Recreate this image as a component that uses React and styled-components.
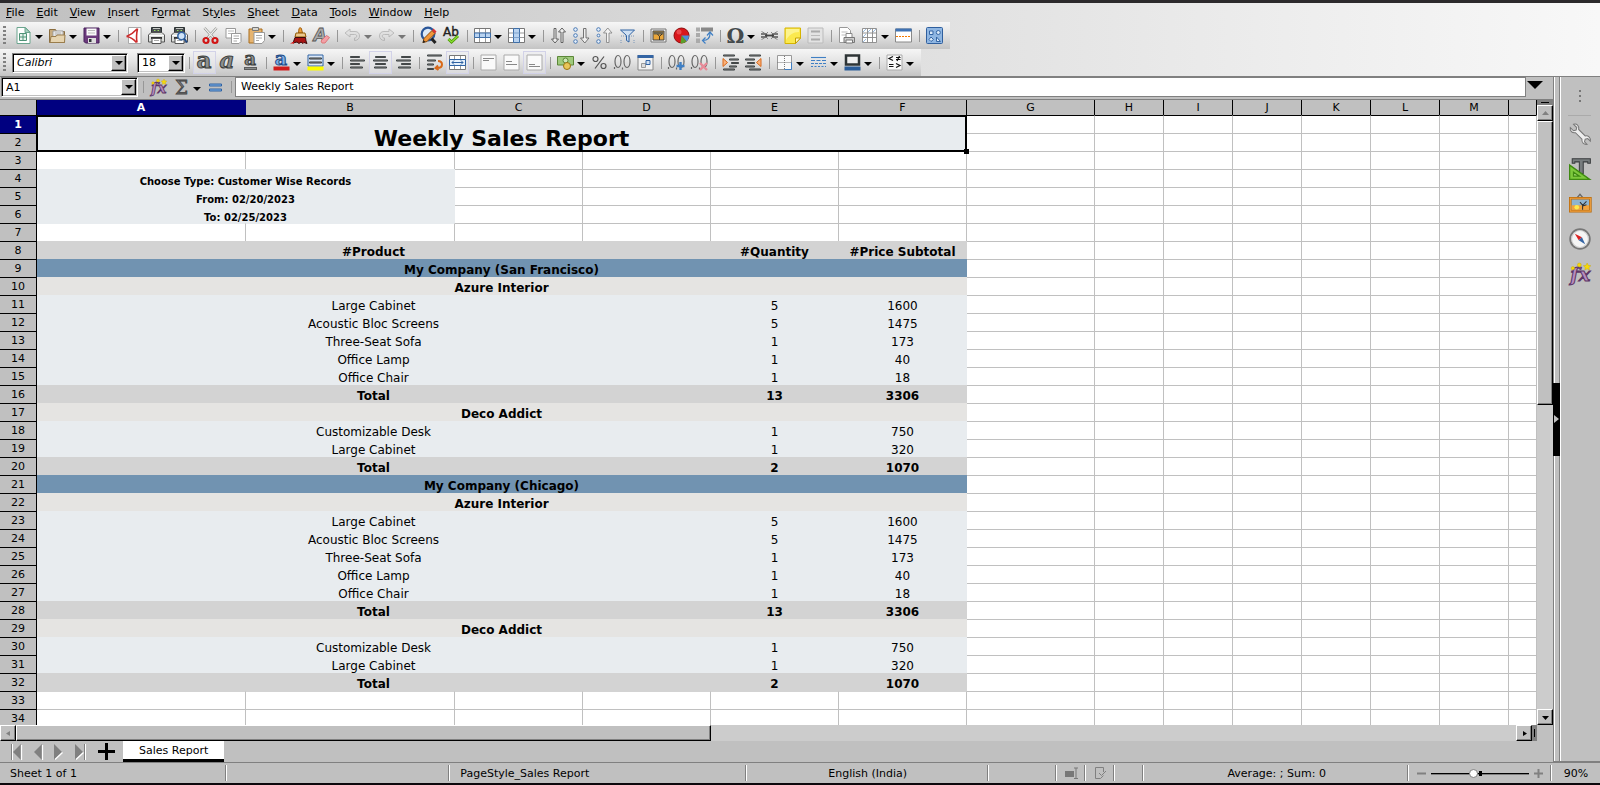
import React from 'react';
import styled, { createGlobalStyle, css } from 'styled-components';

const GlobalStyle = createGlobalStyle`
  * {
    box-sizing: border-box;
  }
  body {
    margin: 0;
    background: #c0c0c0;
    color: #000;
    font: 11px/14px 'DejaVu Sans', sans-serif;
  }
  button, input, select {
    font: inherit;
    color: inherit;
    margin: 0;
    padding: 0;
    border: 0;
    background: none;
    border-radius: 0;
  }
`;

const raised = css`
  background: #c0c0c0;
  border: 1px solid;
  border-color: #fff #000 #000 #fff;
  box-shadow: inset -1px -1px 0 #808080;
`;

const Window = styled.div`
  display: flex;
  flex-direction: column;
  height: 100vh;
  min-height: 400px;
  overflow: hidden;
  border-top: 3px solid #2c2a2c;
  border-bottom: 2px solid #0c080c;
`;

const Bars = styled.header`
  background: linear-gradient(90deg, #c0c0c0, #f8f8f8);
`;

const MenuBar = styled.nav`
  display: flex;
  align-items: center;
  height: 19px;
`;

const MenuItem = styled.button`
  padding: 0 6px;
`;

const Toolbar = styled.div`
  display: flex;
  align-items: center;
  width: fit-content;
  height: 27px;
  padding-right: 4px;
  background: linear-gradient(#f6f6f6, #e4e4e4 45%, #c4c4c4);
`;

const Grip = styled.span`
  width: 3px;
  height: 19px;
  margin: 0 6px 0 3px;
  background: repeating-linear-gradient(#808080 0 2px, transparent 2px 4px);
`;

const Separator = styled.span`
  display: flex;
  justify-content: center;
  width: 8px;
  flex: none;
  &::before {
    content: '';
    width: 1px;
    height: 12px;
    background: #979797;
  }
`;

const ToolButton = styled.button`
  display: flex;
  align-items: center;
  justify-content: center;
  flex: none;
  width: 23px;
  height: 23px;
  opacity: ${props => (props.$dim ? 0.55 : 1)};
  ${props => props.$on && css`
    border: 1px solid #d2d2e8;
    background: rgba(236, 236, 240, 0.5);
  `}
  svg {
    flex: none;
  }
`;

const CaretButton = styled.button`
  display: flex;
  align-items: center;
  flex: none;
  width: 11px;
  height: 23px;
  padding-top: 3px;
  &::before {
    content: '';
    border: 4px solid transparent;
    border-width: 4px 4px 0;
    border-top-color: ${props => (props.$dim ? '#777' : '#000')};
  }
`;

const ComboBox = styled.span`
  position: relative;
  display: flex;
  flex: none;
  width: ${props => props.$width};
  height: 20px;
  background: #fff;
  border: 1px solid;
  border-color: #808080 #fff #fff #808080;
  box-shadow: inset 1px 1px 0 #000, inset -1px -1px 0 #c0c0c0;
  select {
    width: 100%;
    padding-left: 4px;
    appearance: none;
    outline: none;
    font-style: ${props => (props.$italic ? 'italic' : 'normal')};
  }
`;

const ComboArrow = styled.span`
  ${raised}
  position: absolute;
  top: 1px;
  right: 1px;
  bottom: 1px;
  width: 15px;
  display: flex;
  align-items: center;
  justify-content: center;
  pointer-events: none;
  &::before {
    content: '';
    border: 4px solid transparent;
    border-width: 4px 4px 0;
    border-top-color: #000;
  }
`;

const Gap = styled.span`
  width: 9px;
`;

const Body = styled.div`
  flex: 1;
  display: flex;
  min-height: 0;
`;

const Main = styled.main`
  flex: 1;
  display: flex;
  flex-direction: column;
  min-width: 0;
  border-top: 1px solid #808080;
`;

const FormulaBar = styled.div`
  display: flex;
  align-items: flex-start;
  height: 23px;
  padding-left: 1px;
  border-bottom: 1px solid #808080;
  ${ComboBox} {
    margin-right: 1px;
    padding-top: 1px;
  }
  ${ToolButton}, ${CaretButton} {
    height: 20px;
  }
  ${Separator} {
    height: 20px;
    align-items: center;
  }
`;

const FormulaInput = styled.input`
  flex: 1;
  min-width: 0;
  height: 20px;
  padding: 0 5px 1px;
  background: #fff;
  border: 1px solid #808080;
  outline: none;
`;

const ExpandButton = styled.button`
  width: 27px;
  height: 19px;
  padding: 0 9px 2px 0;
  &::before {
    content: '';
    display: inline-block;
    border: 8px solid transparent;
    border-width: 8px 8px 0;
    border-top-color: #000;
  }
`;

const GridArea = styled.div`
  flex: 1;
  display: flex;
  min-height: 0;
`;

const SheetView = styled.div`
  flex: 1;
  min-width: 0;
  overflow: hidden;
  background: #fff;
`;

const Sheet = styled.table`
  width: 100%;
  table-layout: fixed;
  border-collapse: separate;
  border-spacing: 0;
`;

const Col = styled.col`
  width: ${props => props.$width};
`;

const ColHead = styled.th`
  height: 15px;
  padding: 0;
  line-height: 12px;
  font-weight: ${props => (props.$active ? 700 : 400)};
  color: ${props => (props.$active ? '#fff' : '#000')};
  background: ${props => (props.$active ? '#000080' : '#c0c0c0')};
  border-right: 1px solid ${props => (props.$active ? '#000080' : '#000')};
`;

const RowHead = styled.th`
  height: 18px;
  padding: 0;
  line-height: 16px;
  font-weight: ${props => (props.$active ? 700 : 400)};
  color: ${props => (props.$active ? '#fff' : '#000')};
  background: ${props => (props.$active ? '#000080' : '#c0c0c0')};
  border: solid #000;
  border-width: 1px 1px 0 0;
`;

const fills = {
  info: '#e8ecef',
  head: '#d3d3d3',
  company: '#7193b1',
  partner: '#e5e4e2',
};

const Cell = styled.td`
  position: ${props => (props.$title ? 'relative' : 'static')};
  height: 18px;
  padding: 0;
  vertical-align: bottom;
  text-align: center;
  white-space: nowrap;
  font-size: 12px;
  line-height: 14px;
  font-weight: ${props => (props.$bold ? 700 : 400)};
  border: solid #c0c0c0;
  border-width: 1px 1px 0 0;
  ${props => props.$edge && css`
    border-top-color: ${props.$edge};
  `}
  ${props => props.$fill && css`
    background: ${props.$fill};
    border-color: ${props.$fill};
  `}
  ${props => props.$small && css`
    font-size: 10px;
    line-height: 10px;
  `}
  ${props => props.$title && css`
    font-size: 22px;
    line-height: 24px;
  `}
`;

const CellCursor = styled.span`
  position: absolute;
  inset: -1px;
  border: 2px solid #000;
  &::after {
    content: '';
    position: absolute;
    right: -4px;
    bottom: -4px;
    width: 5px;
    height: 5px;
    background: #000;
  }
`;

const ScrollColumn = styled.div`
  display: flex;
  flex-direction: column;
  width: 16px;
  background: #ccc;
`;

const ScrollRow = styled.div`
  display: flex;
  height: 16px;
  padding-right: 16px;
  background: linear-gradient(#c0c0c0, #c0c0c0) right / 16px 100% no-repeat #ccc;
`;

const Thumb = styled.div`
  ${raised}
  flex: ${props => props.$size} 1 0;
`;

const Track = styled.div`
  flex: ${props => props.$size} 1 0;
`;

const Split = styled.div`
  display: flex;
  align-items: center;
  justify-content: center;
  flex: 0 0 5px;
  background: #808080;
  &::before {
    content: '';
    background: #000;
    width: ${props => (props.$vertical ? '1px' : '8px')};
    height: ${props => (props.$vertical ? '8px' : '1px')};
  }
`;

const ScrollButton = styled.button`
  ${raised}
  display: flex;
  align-items: center;
  justify-content: center;
  flex: 0 0 16px;
  height: 16px;
`;

const Tabs = styled.div`
  display: flex;
  height: 21px;
  padding-left: 6px;
`;

const TabNav = styled.button`
  display: flex;
  align-items: center;
  width: ${props => (props.$wide ? '34px' : '21px')};
  height: 21px;
  padding-left: ${props => (props.$wide ? '8px' : '5px')};
`;

const Tab = styled.button`
  margin-left: -1px;
  padding: 1px 16px 0;
  background: #fff;
  border-bottom: 3px solid #000;
`;

const SidebarEdge = styled.div`
  display: flex;
  align-items: center;
  width: 8px;
  border: solid #808080;
  border-width: 1px 0 1px 1px;
  background: linear-gradient(90deg, #fff 1px, #c0c0c0 1px 5px, #808080 5px 6px, #fff 6px);
`;

const EdgeHandle = styled.button`
  display: flex;
  align-items: center;
  justify-content: center;
  flex: none;
  width: 7px;
  height: 73px;
  margin-left: -1px;
  background: #000;
`;

const Sidebar = styled.aside`
  display: flex;
  flex-direction: column;
  align-items: center;
  width: 39px;
  padding-right: 2px;
  border: solid #808080;
  border-width: 1px 0;
`;

const SidebarMenu = styled.button`
  display: flex;
  align-items: center;
  justify-content: center;
  width: 23px;
  height: 39px;
  border-bottom: 1px solid #aaa;
`;

const DeckButton = styled.button`
  display: flex;
  align-items: center;
  justify-content: center;
  width: 35px;
  height: 35px;
`;

const StatusBar = styled.footer`
  display: flex;
  align-items: stretch;
  height: 21px;
  border-top: 1px solid #808080;
`;

const Field = styled.div`
  display: flex;
  align-items: center;
  justify-content: ${props => (props.$start ? 'flex-start' : 'center')};
  text-indent: ${props => (props.$start ? '10px' : '0')};
  flex: ${props => (props.$grow ? `${props.$grow} 1 0` : '0 0 29px')};
  min-width: 0;
  gap: 5px;
  padding-top: 1px;
  white-space: nowrap;
  background: linear-gradient(90deg, #808080 1px, #fff 1px) 100% 50% / 2px 16px no-repeat;
  &:last-child {
    background: none;
  }
`;

const ZoomField = styled(Field)`
  flex: 0 0 143px;
`;

const ZoomLevel = styled(Field)`
  flex: 0 0 48px;
`;

const ZoomStep = styled.button`
  display: flex;
  width: 9px;
`;

const ZoomSlider = styled.input`
  appearance: none;
  width: 98px;
  height: 10px;
  background:
    linear-gradient(#000, #000) 50% 50% / 3px 5px no-repeat,
    linear-gradient(#000 1px, #808080 1px) 0 50% / 100% 2px no-repeat;
  &::-webkit-slider-thumb {
    appearance: none;
    width: 9px;
    height: 9px;
    border-radius: 50%;
    background: #fff;
    border: 1px solid #808080;
  }
`;

const GlyphA = ({ fill = '#8d908e', stroke = '#3a3d3b', size = 23, italic, y = 14, x = 8 }) => (
  <text x={x} y={y} textAnchor="middle" fontFamily="DejaVu Serif" fontWeight="700" fontStyle={italic ? 'italic' : 'normal'} fontSize={size} fill={fill} stroke={stroke} strokeWidth="1">a</text>
);

const Lines = ({ rows, stroke = '#2e3436' }) => rows.map(([x1, x2, y]) => (
  <g key={y}>
    <path d={`M${x1} ${y}H${x2}`} stroke={stroke} strokeWidth="2" strokeLinecap="round" />
    <path d={`M${x1} ${y}H${x2}`} stroke="#777" strokeWidth="0.6" />
  </g>
));

const Table = () => (
  <>
    <path d="M.5 1.500h16v14h-16z" fill="#fff" stroke="#777" />
    <path d="M5.500 2v13M11.500 2v13M1 6h15M1 10.500h15" stroke="#999" fill="none" />
  </>
);

const Printer = () => (
  <>
    <path d="M3.500 .5h10v6h-10z" fill="#4a4e50" stroke="#2e3436" />
    <path d="M5 1.500h7" stroke="#c5c8c4" />
    <path d="M6 3.500h1.500m2 0H11" stroke="#9adf62" />
    <path d="M3 5.500h11l2.500 2.500v7H.5V8z" fill="#dcdedb" stroke="#555" />
    <path d="M1 8.500h15" stroke="#fff" />
    <path d="M3 10h11v2H3z" fill="#333" />
    <path d="M4 11.500h9v5H4z" fill="#fff" stroke="#555" />
    <path d="M6 13.500h5" stroke="#aaa" />
  </>
);

const Fx = () => (
  <>
    <text x="1" y="14" fontFamily="DejaVu Serif" fontStyle="italic" fontWeight="700" fontSize="15" fill="#b78dbf" stroke="#5c3566" strokeWidth=".8">fx</text>
    <g fill="#f5d90a" stroke="#c4a000" strokeWidth=".3">
      <circle cx="3" cy="4" r="1.300" />
      <circle cx="8" cy="1.500" r="1.500" />
      <path d="M14 0l.9 1.800 2 .3-1.500 1.400.4 2L14 4.500l-1.800 1 .4-2-1.500-1.400 2-.3z" />
    </g>
  </>
);

const Zeros = () => (
  <g fill="none" stroke="#666" strokeWidth="1.200">
    <ellipse cx="4" cy="7.500" rx="3" ry="6" />
    <ellipse cx="13" cy="7.500" rx="3" ry="6" />
    <path d="M8.500 13.500v2M.500 13v2" />
  </g>
);

const Dots = ({ small }) => (
  <g fill="#e8f1fb" stroke="#4a7ab5">
    <circle cx="2.500" cy="2.500" r="1.800" />
    <circle cx="2.500" cy="8.500" r={small ? 1.400 : 1.800} />
    <circle cx="2.500" cy="14.500" r="1.800" />
  </g>
);

const icons = {
  newSheet: (
    <>
      <path d="M2 .5h8.500L15 5v11.500H2z" fill="#fff" stroke="#6ba58e" />
      <path d="M10 .5V5.500h5z" fill="#a9d1c0" stroke="#6ba58e" />
      <path d="M4.500 6.500h7v7h-7zM8 6.500v7M4.500 10h7" fill="#e5f3ec" stroke="#4f9377" />
    </>
  ),
  open: (
    <>
      <path d="M.5 2.500h6l1 2h8v11H.5z" fill="#c7ab7f" stroke="#8a6d3f" />
      <path d="M4 4h10v8H4z" fill="#fff" stroke="#999" />
      <path d="M5.500 6h7M5.500 8h7" stroke="#999" />
      <path d="M1 15.500l1-6h5l1-1.500h8l-.5 7.500z" fill="#e6d4b0" stroke="#9a7d4c" />
    </>
  ),
  save: (
    <>
      <path d="M1 1h15v15H2.500L1 14.500z" fill="#6b3a7c" stroke="#47215a" />
      <path d="M3.500 1.500h10v7h-10z" fill="#fafafa" />
      <path d="M5 3.500h7M5 6h7" stroke="#bbb" />
      <path d="M5 11h8v5H5z" fill="#ddd" />
      <path d="M6 12h2.500v3H6z" fill="#2e3436" />
    </>
  ),
  pdf: (
    <>
      <path d="M3.500 .5h12.500v16h-12.500z" fill="#fff" stroke="#aaa" />
      <path d="M12.500 1.500c-1 5-1.500 9-.5 14M1.500 9.500C5 8 9 5.500 12 2M1.500 9.500c4 .5 7 2.500 10 6" fill="none" stroke="#cc2a2a" strokeWidth="1.600" />
    </>
  ),
  print: <Printer />,
  preview: (
    <>
      <Printer />
      <circle cx="10.500" cy="9" r="3.700" fill="#cfe3f8" stroke="#3465a4" strokeWidth="1.500" />
      <path d="M13 11.500l3 4" stroke="#204a87" strokeWidth="2" />
    </>
  ),
  cut: (
    <>
      <path d="M2.500 1L12 11.500M14.500 1L5 11.500" stroke="#888a85" strokeWidth="2.600" />
      <path d="M2.500 1L12 11.500M14.500 1L5 11.500" stroke="#eee" strokeWidth="1.200" />
      <circle cx="4" cy="13.500" r="2.500" fill="none" stroke="#d11515" strokeWidth="2.200" />
      <circle cx="13" cy="13.500" r="2.500" fill="none" stroke="#d11515" strokeWidth="2.200" />
    </>
  ),
  copy: (
    <>
      <path d="M1 1.500h9.500V11H1z" fill="#fff" stroke="#999" />
      <path d="M3 4h6M3 6.500h6" stroke="#bbb" />
      <path d="M6.500 6.500H16v8l-2 2H6.500z" fill="#fff" stroke="#999" />
      <path d="M8.500 9h5.500M8.500 11.500h5.500M8.500 14H12" stroke="#aaa" />
    </>
  ),
  paste: (
    <>
      <path d="M1 2h13v14H1z" fill="#e6b470" stroke="#a86d1c" />
      <path d="M4.500.5h6v3h-6z" fill="#d5d5d0" stroke="#777" />
      <path d="M6 5.500h10.500v8l-2.500 3H6z" fill="#fff" stroke="#999" />
      <path d="M8 8.500h6M8 11h6M8 13.500h3" stroke="#aaa" />
    </>
  ),
  brush: (
    <>
      <path d="M9 1.500c.5-1 2.500-1 2.500.5L12.500 6h-4z" fill="#f0a23a" stroke="#a05f10" />
      <path d="M6 6h9l1 4H5z" fill="#ecc88e" stroke="#8f5902" />
      <path d="M5 10.500H15.500l.5 3.500 1 2.500-3-1-1 1-2-1.500-2 1.500-2-1.500L3 16z" fill="#a81414" stroke="#3b0a0a" />
      <path d="M0 16.500l4-2v2z" fill="#d11" />
    </>
  ),
  clear: (
    <>
      <text x="7" y="14" textAnchor="middle" fontFamily="DejaVu Sans" fontStyle="italic" fontWeight="700" fontSize="17" fill="#aaa" stroke="#555" strokeWidth=".8">A</text>
      <path d="M8 14l5.500-5.500 3 2L12 16H9z" fill="#f2a0a8" stroke="#d77" />
    </>
  ),
  undo: <path d="M1 6l5-4v2.500h5c3 0 4.500 2 4.500 4.500 0 2.500-2 4.500-5 4.500v-2.500c1.500 0 2.200-.8 2.200-2S12 7.500 10.500 7.500H6V10z" fill="#ddd" stroke="#999" />,
  redo: <path d="M16 6l-5-4v2.500H6C3 4.500 1.500 6.500 1.500 9c0 2.500 2 4.500 5 4.500v-2.500C5 11 4.300 10.200 4.300 9S5 7.500 6.500 7.500H11V10z" fill="#ddd" stroke="#999" />,
  find: (
    <>
      <circle cx="8" cy="7" r="6.300" fill="#dce9f7" stroke="#2a5699" strokeWidth="2.200" />
      <path d="M11.500 11.500l4 4.500" stroke="#222" strokeWidth="3" />
      <path d="M3 15.500l1-4 8-8 3 3-8 8z" fill="#f0953a" stroke="#8a4b0a" />
      <path d="M12 3.500l3 3 1.500-2-3-3z" fill="#d33" />
      <path d="M2.500 16l1-3 2 2z" fill="#222" />
    </>
  ),
  spell: (
    <>
      <text x="0" y="9" fontFamily="DejaVu Sans" fontSize="12" fill="#222" stroke="#222" strokeWidth=".4">Ab</text>
      <path d="M5.500 12l3 3L15 9" fill="none" stroke="#4e9a06" strokeWidth="3" />
      <path d="M5.500 12l3 3L15 9" fill="none" stroke="#8ae234" strokeWidth="1.200" />
    </>
  ),
  row: (
    <>
      <Table />
      <path d="M.5 6h16v4.500H.5z" fill="#b9d3f0" stroke="#3f6fa8" />
      <path d="M5.500 6v4.500M11.500 6v4.500" stroke="#3f6fa8" />
    </>
  ),
  column: (
    <>
      <Table />
      <path d="M5.500 1.500h6v14h-6z" fill="#b9d3f0" stroke="#3f6fa8" />
      <path d="M5.500 6h6M5.500 10.500h6" stroke="#7fa3cd" />
    </>
  ),
  sort: (
    <g fill="#eee" stroke="#555" strokeWidth=".9">
      <path d="M4 1.500h2V12h2.500L5 16 1.500 12H4z" />
      <path d="M11 15.500h2V5h2.500L12 1 8.500 5H11z" />
    </g>
  ),
  ascending: (
    <>
      <Dots />
      <path d="M10.500 1.500h2.500V11h3l-4.200 5-4.300-5h3z" fill="#eee" stroke="#666" strokeWidth=".9" />
    </>
  ),
  descending: (
    <>
      <Dots small />
      <path d="M10.500 15.500h2.500V6h3l-4.200-5L7.500 6h3z" fill="#f2f2f2" stroke="#888" strokeWidth=".9" />
    </>
  ),
  filter: (
    <>
      <path d="M2 9h13M2 13v3M15 13v3" stroke="#7a96b8" strokeDasharray="1 1" />
      <path d="M1.500 3h14L10 8.500v6.500l-2.500-1.500V8.500z" fill="#cfe0f3" stroke="#2f62a3" />
    </>
  ),
  image: (
    <>
      <path d="M1 2h15v13H1z" fill="#eee" stroke="#777" />
      <path d="M3 4h11v9H3z" fill="#e9a63a" stroke="#444" />
      <path d="M3.500 4.500h10v3h-10z" fill="#6b6550" />
      <path d="M9.500 13V9.500L7.500 7M9.500 9.500L12 7" stroke="#222" fill="none" strokeWidth=".8" />
    </>
  ),
  chart: (
    <>
      <circle cx="8.500" cy="8.500" r="7.500" fill="#d9161b" stroke="#8e0b0b" />
      <path d="M8.500 8.500H16c0 3-1.200 4.800-2.500 6z" fill="#4a90d9" />
      <path d="M8.500 8.500l5 6c-2 1.600-4 2-6 1.500z" fill="#5aa02c" />
      <circle cx="6" cy="5" r="2.500" fill="#f4696c" opacity=".6" />
    </>
  ),
  pivot: (
    <>
      <path d="M0 .5h4v4H0zM0 6h4v4H0zM0 11.500h4v4.500H0z" fill="#aaa" />
      <path d="M5 .5h12v4H5z" fill="#888" />
      <path d="M7 13.500c4 0 7-2 7-7M11 8.500l3-3.500 3 3.500M9.500 10.500l-3 3 3 3" fill="none" stroke="#3f7fc4" strokeWidth="1.200" />
    </>
  ),
  omega: <text x="8.500" y="15.500" textAnchor="middle" fontFamily="DejaVu Serif" fontSize="20" fontWeight="700" fill="#444a4c">Ω</text>,
  link: (
    <>
      <path d="M.5 4.500l3 1.500M.5 12.500l3-1.500M16.500 4.500l-3 1.500M16.500 12.500l-3-1.500M6 5l1 1M11 5l-1 1M6 12l1-1M11 12l-1-1" stroke="#888" />
      <path d="M0 7h5.500v3H0M17 7h-5.500v3H17" stroke="#555" strokeWidth="1.300" />
      <path d="M4 8.500h9" stroke="#444" strokeWidth="1.800" />
    </>
  ),
  note: (
    <>
      <path d="M1 1h15.500v10l-5 5.500H1z" fill="#fbe94e" stroke="#d6b400" />
      <path d="M2 2h13v3C9 5 5 8 2 13z" fill="#fdf48e" />
      <path d="M11.500 16.500v-5.500h5z" fill="#fff9c0" stroke="#c4a000" />
    </>
  ),
  headers: (
    <>
      <path d="M1 1h15v15H1z" fill="#e3e3e3" stroke="#bbb" />
      <path d="M4 4.500h9M4 12.500h9" stroke="#aaa" strokeWidth="2" />
      <path d="M4 8.500h9" stroke="#bbb" />
    </>
  ),
  printArea: (
    <>
      <path d="M1.500.5h8l3 3v12h-11z" fill="#fff" stroke="#999" />
      <path d="M3.500 5h6M3.500 8h4" stroke="#bbb" />
      <path d="M8 6.500h6v4H8z" fill="#fff" stroke="#888" />
      <path d="M6 10.500h10.500v5H6z" fill="#ccc" stroke="#777" />
      <path d="M8 13h6.500v3H8z" fill="#fff" stroke="#777" />
    </>
  ),
  freeze: (
    <>
      <path d="M1.500 1.500h14v14h-14z" fill="#fff" />
      <path d="M2 5l3-3M7 5l3-3M12 5l3-3M2 10l3-3M2 15l3-3" stroke="#9dbde0" />
      <path d="M1.500 1.500h14v14h-14zM6.500 1.500v14M11.500 1.500v14M1.500 6h14M1.500 10.500h14" fill="none" stroke="#888" strokeWidth=".9" />
    </>
  ),
  split: (
    <>
      <path d="M.5 2h16v13H.5z" fill="#fff" stroke="#888" />
      <path d="M.5 1.500h16v3H.5z" fill="#3f72b3" />
      <path d="M1 9.500h15" stroke="#f57900" strokeDasharray="2 1" />
    </>
  ),
  draw: (
    <>
      <rect x=".5" y=".5" width="16" height="16" rx="1" fill="#8fb6e2" stroke="#2f5f9e" />
      <path d="M3.500 4h3.500v3.500h-3.500zM3 12.500l2-2.500 2.500 2.500L5 14.500zM10.500 10v4.500h4z" fill="#dcebfa" stroke="#3465a4" />
      <circle cx="12.300" cy="5.500" r="2" fill="#dcebfa" stroke="#3465a4" />
    </>
  ),
  bold: <GlyphA />,
  italic: <GlyphA italic />,
  underline: (
    <>
      <GlyphA size={18} y={11} />
      <path d="M2 14.500h13" stroke="#333" strokeWidth="2.500" />
      <path d="M2.500 14.500h12" stroke="#8a8d8b" strokeWidth="1" />
    </>
  ),
  fontColor: (
    <>
      <GlyphA fill="#7fb0e6" stroke="#204a87" size={19} y={11} />
      <path d="M.5 12.500h16v4H.5z" fill="#d01c1c" />
    </>
  ),
  highlight: (
    <>
      <path d="M1 1h15v11H1z" fill="#dce9f8" stroke="#2f62a3" />
      <Lines rows={[[3, 14, 4.500], [3, 14, 8.500]]} />
      <path d="M.5 12.500h16v4H.5z" fill="#fdfd00" />
    </>
  ),
  left: <Lines rows={[[2, 10, 3], [2, 15, 6.500], [2, 10, 10], [2, 13, 13.500]]} />,
  center: <Lines rows={[[4, 13, 3], [2, 15, 6.500], [4, 13, 10], [3, 14, 13.500]]} />,
  right: <Lines rows={[[7, 15, 3], [2, 15, 6.500], [7, 15, 10], [4, 15, 13.500]]} />,
  wrap: (
    <>
      <Lines rows={[[2, 15, 1.500], [2, 9, 6.500], [2, 7, 10.500], [2, 7, 15]]} />
      <path d="M12 7c3 0 4 1.500 4 3.500s-1.500 3.500-5 3.500M12 11.500L9.500 14l3 2" fill="none" stroke="#d9691a" strokeWidth="2" />
    </>
  ),
  merge: (
    <>
      <Table />
      <path d="M.5 5.500h16v6H.5z" fill="#e6f0fb" stroke="#2f62a3" />
      <path d="M3 8.500h11M5 6.500l-2 2 2 2M12 6.500l2 2-2 2" fill="none" stroke="#2f62a3" />
    </>
  ),
  page: <path d="M1 1h15v15H1z" fill="#fafafa" stroke="#aaa" />,
  percent: (
    <g stroke="#555" strokeWidth="1.200">
      <circle cx="4.500" cy="5" r="2.500" />
      <circle cx="12.500" cy="12" r="2.500" />
      <path d="M13 2.500L4 14.500" />
    </g>
  ),
  currency: (
    <>
      <path d="M.5 2.500h16V11H.5z" fill="#9fca7c" stroke="#5b8738" />
      <circle cx="8.500" cy="6.500" r="2.500" fill="#cfe8b8" stroke="#5b8738" />
      <circle cx="10" cy="12" r="3.500" fill="#e9c65a" stroke="#9a7410" />
    </>
  ),
  number: <Zeros />,
  date: (
    <>
      <path d="M1 1.500h15v14.500H1z" fill="#f2f2f2" stroke="#888" />
      <path d="M.5 1h16v3H.5z" fill="#3465a4" />
      <path d="M4.500 9.500h4v4h-4z" fill="#ddd" stroke="#999" />
      <path d="M9 6.500h4v4H9z" fill="#cfe0f3" stroke="#3465a4" />
    </>
  ),
  addDecimal: (
    <>
      <Zeros />
      <path d="M12.500 8v8M8.500 12h8" stroke="#3f7fc4" strokeWidth="2.400" />
    </>
  ),
  delDecimal: (
    <>
      <Zeros />
      <path d="M9 9l7 7M16 9l-7 7" stroke="#e88a98" strokeWidth="2.400" />
    </>
  ),
  indent: (
    <>
      <Lines rows={[[2, 12, 1.500], [8, 16, 5.500], [10, 16, 9], [8, 14, 12.500], [2, 12, 15.500]]} />
      <path d="M1 4.500l4.500 4-4.500 4z" fill="#f9b27c" stroke="#d9691a" />
    </>
  ),
  outdent: (
    <>
      <Lines rows={[[5, 15, 1.500], [1, 9, 5.500], [3, 9, 9], [1, 9, 12.500], [5, 15, 15.500]]} />
      <path d="M16 4.500l-4.500 4 4.500 4z" fill="#f9b27c" stroke="#d9691a" />
    </>
  ),
  borders: (
    <>
      <path d="M1.500 1.500h14v14h-14z" fill="#fafafa" stroke="#999" />
      <path d="M8.500 2v14M1.500 8.500H16" stroke="#777" strokeDasharray="1 1" />
      <path d="M8.500 15.500h7V8.500" fill="none" stroke="#3f7fc4" />
    </>
  ),
  borderStyle: (
    <g stroke="#3f7fc4" strokeWidth="1.100">
      <path d="M1 3.500h15" />
      <path d="M1 6.500h15" strokeDasharray="4 1.500" />
      <path d="M1 9.500h15" strokeDasharray="3 1" />
      <path d="M1 12.500h15" strokeDasharray="2 1.500" />
    </g>
  ),
  borderColor: (
    <>
      <path d="M2 1.500h13v9H2z" fill="#f0f0f0" stroke="#2e3436" strokeWidth="2.500" />
      <path d="M.5 12.500h16v4H.5z" fill="#2a5c99" />
    </>
  ),
  conditional: (
    <>
      <path d="M1 1h15v15H1z" fill="#fafafa" stroke="#aaa" />
      <path d="M7 2.500L3 4.500l4 2M10 3.500h4.500M10 5.500h4.500M13.500 2l-2.500 5M3 10.500h4.500M3 12.500h4.500M10 9.500l4 2-4 2" fill="none" stroke="#111" strokeWidth="1.200" />
    </>
  ),
  fx: <Fx />,
  sum: <text x="8.500" y="15" textAnchor="middle" fontFamily="DejaVu Serif" fontSize="18" fill="#777" stroke="#444" strokeWidth=".8">Σ</text>,
  equals: (
    <g fill="#7fb0e6" stroke="#2f62a3">
      <path d="M2.500 5h12v2h-12zM2.500 10h12v2h-12z" />
    </g>
  ),
  wrench: (
    <path d="M1 3.500L3.500 6l2-.5.5-2L3.500 1C6 .2 8 2 7.500 5l5 5c2.500-.5 4.500 1.500 4 4l-2-2-2 .5-.5 2 2 2c-2.500.5-4.500-1.500-4-4L5 7.500C2.500 8 .5 6 1 3.500z" fill="#eee" stroke="#777" strokeWidth=".8" />
  ),
  styles: (
    <>
      <path d="M2.500.5h14v3.500h-2V3H11v9H8V3H4.500v1h-2z" fill="#777c7e" stroke="#3a3d3f" strokeWidth=".8" />
      <path d="M.5 5.500V16.500H16z" fill="#7dc93c" stroke="#3f8a12" />
      <path d="M3.500 11v3h4.500z" fill="#a7dd78" stroke="#3f8a12" />
    </>
  ),
  gallery: (
    <>
      <path d="M6 4l2.500-3L11 4" fill="none" stroke="#666" />
      <path d="M1 4h15.500v10H1z" fill="#8fb4d0" stroke="#b86a0a" strokeWidth="2" />
      <path d="M1 4h15.500v10H1z" stroke="#f0a040" strokeWidth=".8" />
      <path d="M2 9.500h13.500V13H2z" fill="#f3a33c" />
      <circle cx="6" cy="11" r="1.800" fill="#fce94f" />
      <path d="M10.500 13V9.500L8.500 7M10.500 9.500L13.500 6.500M10.500 10l3-1" stroke="#333" fill="none" strokeWidth=".8" />
    </>
  ),
  navigator: (
    <>
      <circle cx="8.500" cy="8.500" r="7.500" fill="#f5f5f5" stroke="#777" strokeWidth="1.600" />
      <circle cx="8.500" cy="8.500" r="6.500" fill="none" stroke="#ccc" strokeWidth=".8" />
      <path d="M4.500 4.500L10 7.200 7.500 9.500z" fill="#d22" />
      <path d="M12.500 12.500L10 7.200 7.500 9.500z" fill="#3465a4" />
    </>
  ),
};

icons.vtop = (
  <>
    {icons.page}
    <path d="M3 4.500h11M3 6.500h6" stroke="#888" />
  </>
);
icons.vmiddle = (
  <>
    {icons.page}
    <path d="M3 7.500h6M3 10.500h11" stroke="#888" />
  </>
);
icons.vbottom = (
  <>
    {icons.page}
    <path d="M3 10.500h6M3 12.500h11" stroke="#888" />
  </>
);

const Icon = ({ name, size = 17 }) => (
  <svg width={size} height={size} viewBox="0 0 17 17" fill="none" overflow="visible" aria-hidden="true">
    {icons[name]}
  </svg>
);

// '|' is a separator, a trailing 'v' opens a menu, '*' is pressed, '-' is disabled
const standard = [
  'newSheet v', 'open v', 'save v', '|', 'pdf', 'print', 'preview', '|', 'cut', 'copy', 'paste v', '|',
  'brush', 'clear', '|', 'undo v-', 'redo v-', '|', 'find', 'spell', '|', 'row v', 'column v', '|',
  'sort', 'ascending', 'descending', 'filter', '|', 'image', 'chart', 'pivot', '|', 'omega v', 'link',
  'note', 'headers', '|', 'printArea', 'freeze v', 'split', '|', 'draw',
];

const formatting = [
  'bold *', 'italic', 'underline', '|', 'fontColor v', 'highlight v', '|', 'left', 'center *', 'right', '|',
  'wrap', 'merge *', '|', 'vtop', 'vmiddle', 'vbottom *', '|', 'currency v', 'percent', 'number', 'date', '|',
  'addDecimal', 'delDecimal', '|', 'indent', 'outdent', '|', 'borders v', 'borderStyle v', 'borderColor v', '|',
  'conditional v',
];

const Tools = ({ items }) => items.map((item, i) => {
  if (item === '|') return <Separator key={i} />;
  const [name, flags = ''] = item.split(' ');
  const dim = flags.includes('-');
  return (
    <React.Fragment key={i}>
      <ToolButton aria-label={name} $on={flags.includes('*')} $dim={dim}>
        <Icon name={name} />
      </ToolButton>
      {flags.includes('v') && <CaretButton aria-label={`${name} options`} $dim={dim} />}
    </React.Fragment>
  );
});

const Combo = ({ label, value, width, italic }) => (
  <ComboBox $width={width} $italic={italic}>
    <select aria-label={label} defaultValue={value}>
      <option>{value}</option>
    </select>
    <ComboArrow />
  </ComboBox>
);

// the letter after '_' is the access key
const menus = ['_File', '_Edit', '_View', '_Insert', 'F_ormat', 'St_yles', '_Sheet', '_Data', '_Tools', '_Window', '_Help'];

const Menu = ({ label }) => {
  const [before, after] = label.split('_');
  return <MenuItem>{before}<u>{after[0]}</u>{after.slice(1)}</MenuItem>;
};

const letters = ['A', 'B', 'C', 'D', 'E', 'F', 'G', 'H', 'I', 'J', 'K', 'L', 'M', ''];
const widths = [209, 209, 128, 128, 128, 128, 128, 69, 69, 69, 69, 69, 69];

const companyRows = company => [
  { type: 'company', text: company },
  { type: 'partner', text: 'Azure Interior' },
  { type: 'line', cells: ['Large Cabinet', 5, 1600] },
  { type: 'line', cells: ['Acoustic Bloc Screens', 5, 1475] },
  { type: 'line', cells: ['Three-Seat Sofa', 1, 173] },
  { type: 'line', cells: ['Office Lamp', 1, 40] },
  { type: 'line', cells: ['Office Chair', 1, 18] },
  { type: 'head', cells: ['Total', 13, 3306] },
  { type: 'partner', text: 'Deco Addict' },
  { type: 'line', cells: ['Customizable Desk', 1, 750] },
  { type: 'line', cells: ['Large Cabinet', 1, 320] },
  { type: 'head', cells: ['Total', 2, 1070] },
];

const rows = [
  { type: 'title', text: 'Weekly Sales Report' },
  { type: 'covered' },
  { type: 'blank' },
  { type: 'info', text: 'Choose Type: Customer Wise Records' },
  { type: 'info', text: 'From: 02/20/2023' },
  { type: 'info', text: 'To: 02/25/2023' },
  { type: 'blank', edge: fills.info, edgeCols: 2 },
  { type: 'head', cells: ['#Product', '#Quantity', '#Price Subtotal'] },
  ...companyRows('My Company (San Francisco)'),
  ...companyRows('My Company (Chicago)'),
  { type: 'blank', edge: fills.head, edgeCols: 6 },
  { type: 'blank' },
];

const blanks = (from, row = {}) => letters.slice(from).map((letter, i) => (
  <Cell key={letter + i} $edge={row.edge && from + i < row.edgeCols ? row.edge : row.top} />
));

const RowCells = ({ row }) => {
  switch (row.type) {
    case 'title':
      return (
        <>
          <Cell colSpan={6} rowSpan={2} $title $bold $fill={fills.info}>
            {row.text}
            <CellCursor />
          </Cell>
          {blanks(6, { top: '#000' })}
        </>
      );
    case 'covered':
      return blanks(6);
    case 'info':
      return (
        <>
          <Cell colSpan={2} $bold $small $fill={fills.info}>{row.text}</Cell>
          {blanks(2)}
        </>
      );
    case 'company':
    case 'partner':
      return (
        <>
          <Cell colSpan={6} $bold $fill={fills[row.type]}>{row.text}</Cell>
          {blanks(6)}
        </>
      );
    case 'head':
    case 'line':
      return (
        <>
          {row.cells.map((value, i) => (
            <Cell key={i} colSpan={i === 0 ? 4 : 1} $bold={row.type === 'head'} $fill={fills[row.type] || fills.info}>{value}</Cell>
          ))}
          {blanks(6)}
        </>
      );
    default:
      return blanks(0, row);
  }
};

const Arrow = ({ d, color = '#000' }) => (
  <svg width="9" height="9" viewBox="0 0 9 9" aria-hidden="true">
    <path d={d} fill={color} />
  </svg>
);

const NavIcon = ({ d, bar, flip }) => (
  <svg width="12" height="16" viewBox="0 0 12 16" aria-hidden="true">
    <path d={d} fill="#808080" />
    <path d={flip ? 'M2 15.500l7.500-7' : 'M10.500 1v15'} stroke="#fff" strokeWidth="1.300" />
    {bar !== undefined && <path d={`M${bar} 0v16`} stroke="#808080" />}
    {bar !== undefined && <path d={`M${bar + 1} 0v16`} stroke="#fff" />}
  </svg>
);

const App = () => (
  <>
    <GlobalStyle />
    <Window>
      <Bars>
        <MenuBar>
          {menus.map(label => <Menu key={label} label={label} />)}
        </MenuBar>
        <Toolbar>
          <Grip />
          <Tools items={standard} />
        </Toolbar>
        <Toolbar>
          <Grip />
          <Combo label="Font name" value="Calibri" width="116px" italic />
          <Gap />
          <Combo label="Font size" value="18" width="48px" />
          <Separator />
          <Tools items={formatting} />
        </Toolbar>
      </Bars>
      <Body>
        <Main>
          <FormulaBar>
            <Combo label="Name box" value="A1" width="137px" />
            <Separator />
            <Tools items={['fx', 'sum v', 'equals', '|']} />
            <FormulaInput aria-label="Formula" defaultValue="Weekly Sales Report" />
            <ExpandButton aria-label="Expand formula bar" />
          </FormulaBar>
          <GridArea>
            <SheetView>
              <Sheet>
                <colgroup>
                  <Col $width="37px" />
                  {widths.map((width, i) => <Col key={i} $width={`${width}px`} />)}
                  <col />
                </colgroup>
                <thead>
                  <tr>
                    <ColHead />
                    {letters.map((letter, i) => <ColHead key={i} $active={letter === 'A'}>{letter}</ColHead>)}
                  </tr>
                </thead>
                <tbody>
                  {rows.map((row, i) => (
                    <tr key={i}>
                      <RowHead $active={i === 0}>{i + 1}</RowHead>
                      <RowCells row={row} />
                    </tr>
                  ))}
                </tbody>
              </Sheet>
            </SheetView>
            <ScrollColumn>
              <Split />
              <ScrollButton aria-label="Scroll up"><Arrow d="M4.500 2L8 6H1z" color="#808080" /></ScrollButton>
              <Thumb $size={283} />
              <Track $size={306} />
              <ScrollButton aria-label="Scroll down"><Arrow d="M4.500 7L8 3H1z" /></ScrollButton>
            </ScrollColumn>
          </GridArea>
          <ScrollRow>
            <ScrollButton aria-label="Scroll left"><Arrow d="M2 4.500L6 2v5z" color="#808080" /></ScrollButton>
            <Thumb $size={694} />
            <Track $size={807} />
            <ScrollButton aria-label="Scroll right"><Arrow d="M7 4.500L3 2v5z" /></ScrollButton>
            <Split $vertical />
          </ScrollRow>
          <Tabs>
            <TabNav aria-label="First sheet"><NavIcon d="M10 0v16L2 8z" bar={0.5} /></TabNav>
            <TabNav aria-label="Previous sheet"><NavIcon d="M10 0v16L2 8z" /></TabNav>
            <TabNav aria-label="Next sheet"><NavIcon d="M1 0v16l8-8z" flip /></TabNav>
            <TabNav aria-label="Last sheet"><NavIcon d="M1 0v16l8-8z" bar={10.5} flip /></TabNav>
            <TabNav aria-label="Add sheet" $wide>
              <svg width="17" height="17" viewBox="0 0 17 17" aria-hidden="true">
                <path d="M8.500 0v17M0 8.500h17" stroke="#000" strokeWidth="3" />
              </svg>
            </TabNav>
            <Tab>Sales Report</Tab>
          </Tabs>
        </Main>
        <SidebarEdge>
          <EdgeHandle aria-label="Hide sidebar">
            <svg width="5" height="8" viewBox="0 0 5 8" aria-hidden="true"><path d="M0 0l5 4-5 4z" fill="#c0c0c0" /></svg>
          </EdgeHandle>
        </SidebarEdge>
        <Sidebar>
          <SidebarMenu aria-label="Sidebar settings">
            <svg width="2" height="12" viewBox="0 0 2 12" aria-hidden="true"><path d="M0 0h2v2H0zM0 5h2v2H0zM0 10h2v2H0z" fill="#777" /></svg>
          </SidebarMenu>
          {['wrench', 'styles', 'gallery', 'navigator', 'fx'].map(name => (
            <DeckButton key={name} aria-label={name}><Icon name={name} size={22} /></DeckButton>
          ))}
        </Sidebar>
      </Body>
      <StatusBar>
        <Field $grow={227} $start>Sheet 1 of 1</Field>
        <Field $grow={224} />
        <Field $grow={297} $start>PageStyle_Sales Report</Field>
        <Field $grow={242}>English (India)</Field>
        <Field $grow={69} />
        <Field>
          <svg width="13" height="13" viewBox="0 0 13 13" fill="none" aria-hidden="true">
            <path d="M0 4h9v6H0z" fill="#777" />
            <path d="M9 1h4M11 1v10M9 11.500h4" stroke="#777" />
          </svg>
        </Field>
        <Field>
          <svg width="12" height="13" viewBox="0 0 12 13" fill="none" aria-hidden="true">
            <path d="M8.500 5V.500h-8v11h5l3-3M4 6l2.500 2.500L11 4" stroke="#808080" />
          </svg>
        </Field>
        <Field />
        <Field $grow={265}>Average: ; Sum: 0</Field>
        <ZoomField>
          <ZoomStep aria-label="Zoom out">
            <svg width="9" height="9" viewBox="0 0 9 9" aria-hidden="true"><path d="M0 4.500h9" stroke="#808080" strokeWidth="2" /></svg>
          </ZoomStep>
          <ZoomSlider type="range" aria-label="Zoom" min="0" max="100" defaultValue="42" />
          <ZoomStep aria-label="Zoom in">
            <svg width="9" height="9" viewBox="0 0 9 9" aria-hidden="true"><path d="M0 4.500h9M4.500 0v9" stroke="#808080" strokeWidth="2" /></svg>
          </ZoomStep>
        </ZoomField>
        <ZoomLevel>90%</ZoomLevel>
      </StatusBar>
    </Window>
  </>
);

export default App;
